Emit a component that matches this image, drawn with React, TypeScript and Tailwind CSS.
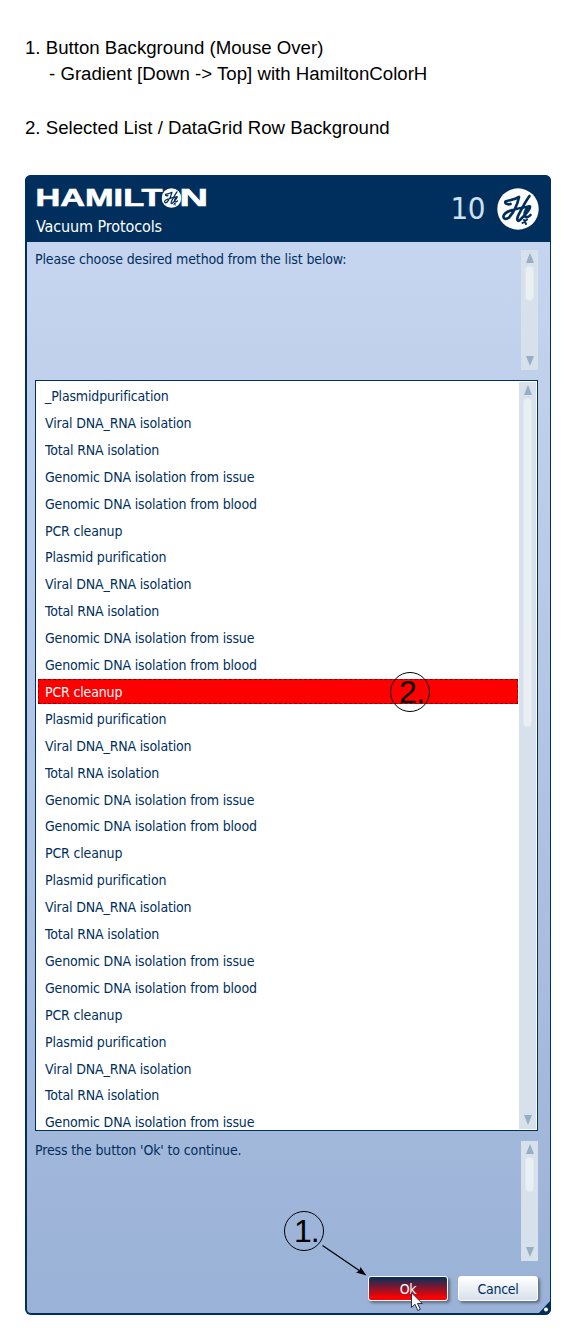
import React from "react";

const cycle = [
  "Viral DNA_RNA isolation",
  "Total RNA isolation",
  "Genomic DNA isolation from issue",
  "Genomic DNA isolation from blood",
  "PCR cleanup",
  "Plasmid purification",
];
const methods = ["_Plasmidpurification", ...Array.from({ length: 27 }, (_, i) => cycle[i % 6])];
const selected = 11;

function Emblem({ ink, className }: { ink: string; className: string }) {
  return (
    <svg viewBox="0 0 42 42" className={className}>
      <circle cx="21" cy="21" r="20.7" fill="#fff" />
      <g fill="none" stroke={ink} strokeWidth="2.7" strokeLinecap="round" strokeLinejoin="round">
        <path d="M13.500 16 C10 17 7.500 15 8.500 13.500 C12 12 17 12 22 9 C20.500 16 17 24 12 29.500 C9 32 6 31 6.500 28 C8 22.500 20 20.500 32 18.500" />
        <path d="M32.500 8 C28 14 24 22 21 28 C19.500 32 20.500 34 23 32 C27 28 34 21 33 18.500 C31 17.500 27 24 27.500 27 C28 30 31.500 29.500 33.500 27" />
        <path d="M25.500 35 L30 31.500 M27 32 L29 36" strokeWidth="2" />
      </g>
    </svg>
  );
}

function ScrollBar({ className, thumb }: { className: string; thumb: string }) {
  return (
    <div className={`flex w-[17px] shrink-0 flex-col items-center bg-[#d7e1eb] ${className}`}>
      <svg viewBox="0 0 8 10" className="mt-[3px] h-[10px] w-2 shrink-0">
        <path d="M4 0 8 10H0Z" fill="#98aec4" />
      </svg>
      <div className={`mt-[3px] w-[9px] shrink-0 rounded-[4px] border border-[#e1e8ef] bg-[#eaeff4] ${thumb}`} />
      <svg viewBox="0 0 8 10" className="mt-auto mb-1 h-[10px] w-2 shrink-0">
        <path d="M0 0H8L4 10Z" fill="#98aec4" />
      </svg>
    </div>
  );
}

function Header() {
  return (
    <header className="flex h-[67px] shrink-0 justify-between bg-[#002f5d] pr-[12px] pl-[10px]">
      <div className="flex flex-col">
        <svg viewBox="0 -8 190 40" className="mt-[3px] h-10 w-[190px]" role="img" aria-label="Hamilton">
          <g
            fill="#fff"
            stroke="#fff"
            strokeWidth="0.6"
            fontFamily="Liberation Sans, Arial, sans-serif"
            fontWeight="700"
            fontSize="24.500"
          >
            <text x="0.500" y="20" textLength="127" lengthAdjust="spacingAndGlyphs">HAMILT</text>
            <text x="144.500" y="20" textLength="28.500" lengthAdjust="spacingAndGlyphs">N</text>
          </g>
          <svg x="126.500" y="2" width="20" height="20">
            <Emblem ink="#002f5d" className="h-5 w-5" />
          </svg>
        </svg>
        <h1 className="-mt-[2px] pl-[1px] text-[16px] leading-[22px] tracking-[-0.1px] text-white">Vacuum Protocols</h1>
      </div>
      <div className="flex items-start gap-3">
        <span className="mt-[13px] text-[31px] leading-[40px] tracking-[-0.5px] text-[#d0e0ee]">10</span>
        <Emblem ink="#002f5d" className="mt-[13px] h-[42px] w-[42px]" />
      </div>
    </header>
  );
}

function MessageArea({ text }: { text: string }) {
  return (
    <section className="flex h-[120px] shrink-0 justify-between text-[14px] leading-[18px] tracking-[-0.13px]">
      <p>{text}</p>
      <ScrollBar className="h-[120px]" thumb="h-[35px]" />
    </section>
  );
}

export default function App() {
  return (
    <main className="relative h-[1340px] w-[576px] overflow-hidden bg-white px-[25px] pt-[34px] font-['Liberation_Sans',Arial,sans-serif] text-black">
      <div className="h-[141px] text-[18.65px] leading-[27px] whitespace-pre">
        <p>1. Button Background (Mouse Over)</p>
        <p className="-mt-px pl-6">- Gradient [Down -&gt; Top] with HamiltonColorH</p>
        <p className="mt-[27px]">2. Selected List / DataGrid Row Background</p>
      </div>

      <div className="relative flex h-[1140px] w-[526px] flex-col overflow-hidden rounded-[6px] bg-[#002f5d] font-['DejaVu_Sans_Condensed','DejaVu_Sans',sans-serif] text-[#002f5d] [font-stretch:condensed]">
        <Header />
        <div className="mr-px mb-[2px] ml-[2px] flex flex-1 flex-col rounded-bl-[4px] bg-linear-to-b from-[#c6d5ef] to-[#9ab2d7] pt-2 pr-3 pl-2">
          <MessageArea text="Please choose desired method from the list below:" />
          <section className="mt-[10px] flex h-[751px] shrink-0 justify-between overflow-hidden border border-[#002f5d] bg-white p-px">
            <ul className="w-[482px] pl-px text-[14px] leading-[25px] tracking-[-0.16px]">
              {methods.map((name, i) => (
                // Rows average 26.9px, so every tenth one is a pixel shorter.
                <li key={i} className={i % 10 === 5 ? "h-[26px] pt-px" : "h-[27px] pt-px"}>
                  <span
                    className={
                      i === selected
                        ? "block h-[25px] w-[480px] border border-dashed border-[#8a0000] bg-[#ff0000] pl-[6px] text-white"
                        : "block h-[25px] w-[480px] border border-transparent pl-[6px]"
                    }
                  >
                    {name}
                  </span>
                </li>
              ))}
            </ul>
            <ScrollBar className="h-[747px]" thumb="h-[329px]" />
          </section>
          <div className="mt-[10px]">
            <MessageArea text="Press the button 'Ok' to continue." />
          </div>
          <div className="mt-[15px] flex justify-end gap-[10px] text-[14px] tracking-[-0.25px]">
            <button className="h-[25px] w-20 rounded-[3px] border border-white bg-linear-to-b/srgb from-[#002f5d] to-[#ff0000] to-90% pt-px leading-[22px] text-white shadow-[2px_2px_3px_#0006]">
              Ok
            </button>
            <button className="h-[25px] w-20 rounded-[3px] border border-white bg-linear-to-b from-white to-[#d7e1eb] pt-px leading-[22px] shadow-[2px_2px_3px_#0006]">
              Cancel
            </button>
          </div>
        </div>
        <svg viewBox="0 0 14 15" className="absolute right-0 bottom-0 h-[15px] w-[14px]">
          <path d="M14 0V15H0Z" fill="#002f5d" />
          <circle cx="9" cy="9.500" r="2" fill="#fff" />
        </svg>
      </div>

      <div className="absolute top-[672px] left-[390px] h-10 w-10 rounded-full border border-black pl-[8px] text-[32px] leading-[39px] tracking-[-0.5px]">2.</div>
      <div className="absolute top-[1211px] left-[284px] h-10 w-10 rounded-full border border-black pl-[9px] text-[32px] leading-[39px] tracking-[-1px]">1.</div>
      <svg viewBox="0 0 50 35" className="absolute top-[1243px] left-[320px] h-[35px] w-[50px]">
        <path d="M2.500 2.500 40 28" stroke="#000" strokeWidth="1.300" />
        <path d="M46.500 32.500 36 29.500 39.500 27.500 40.500 24Z" fill="#000" />
      </svg>
      <svg viewBox="0 0 13 20" className="absolute top-[1292px] left-[411px] h-5 w-[13px]">
        <path d="M.5.8V15.500L4 12.300 6.800 18.500 9.300 17.300 6.500 11.500H11.300Z" fill="#fff" stroke="#26304a" />
      </svg>
    </main>
  );
}
